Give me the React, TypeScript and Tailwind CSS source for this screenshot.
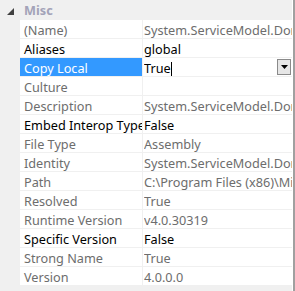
import React from 'react';

interface Prop {
  name: string;
  value: string;
  editable?: boolean;
  selected?: boolean;
}

const props: Prop[] = [
  { name: '(Name)', value: 'System.ServiceModel.Domain' },
  { name: 'Aliases', value: 'global', editable: true },
  { name: 'Copy Local', value: 'True', editable: true, selected: true },
  { name: 'Culture', value: '' },
  { name: 'Description', value: 'System.ServiceModel.Domain' },
  { name: 'Embed Interop Types', value: 'False', editable: true },
  { name: 'File Type', value: 'Assembly' },
  { name: 'Identity', value: 'System.ServiceModel.Domain' },
  { name: 'Path', value: 'C:\\Program Files (x86)\\Microsoft' },
  { name: 'Resolved', value: 'True' },
  { name: 'Runtime Version', value: 'v4.0.30319' },
  { name: 'Specific Version', value: 'False', editable: true },
  { name: 'Strong Name', value: 'True' },
  { name: 'Version', value: '4.0.0.0' },
];

const Row: React.FC<{ p: Prop }> = ({ p }) => (
  <div className="flex h-[19px] border-b border-[#f0f0f0] bg-white">
    <div
      className={`w-[123px] shrink-0 overflow-hidden whitespace-nowrap pl-[4px] pt-[1px] leading-[18px] border-r border-[#f0f0f0] ${
        p.selected ? 'bg-[#3399ff] text-white' : p.editable ? 'text-black' : 'text-[#6d6d6d]'
      }`}
    >
      {p.name}
    </div>
    <div
      className={`flex-1 min-w-0 flex items-center overflow-hidden whitespace-nowrap pl-[1px] ${
        p.editable ? 'text-black' : 'text-[#6d6d6d]'
      }`}
    >
      <span className="flex-1 min-w-0 overflow-hidden pt-[1px] leading-[18px]">
        {p.value}
        {p.selected && <span className="inline-block w-px h-[14px] bg-black align-middle" />}
      </span>
      {p.selected && (
        <div className="w-[14px] h-[16px] shrink-0 mr-[1px] border border-[#8a8a8a] bg-[#e6e6e6] flex items-center justify-center">
          <svg width="7" height="4" viewBox="0 0 7 4">
            <path d="M0 0h7L3.5 4z" fill="#000" />
          </svg>
        </div>
      )}
    </div>
  </div>
);

export default function App() {
  return (
    <div
      className="w-[295px] h-[291px] overflow-hidden bg-[#f0f0f0] text-[12.7px] flex"
      style={{ fontFamily: '"Noto Sans", "Open Sans", sans-serif' }}
    >
      <div className="flex-1 min-w-0 flex flex-col">
        <div className="h-[20px] shrink-0 flex items-center pt-[2px]">
          <div className="w-[20px] flex justify-center">
            <svg width="7" height="7" viewBox="0 0 7 7">
              <path d="M7 0v7H0z" fill="#404040" />
            </svg>
          </div>
          <span className="font-bold text-[#a3a3b8] pl-[4px]">Misc</span>
        </div>
        <div className="pl-[20px] min-w-0 flex flex-col">
          {props.map((p) => (
            <Row key={p.name} p={p} />
          ))}
        </div>
      </div>
      <div className="w-px bg-white" />
      <div className="w-[2px] bg-[#a0a0a0]" />
    </div>
  );
}
